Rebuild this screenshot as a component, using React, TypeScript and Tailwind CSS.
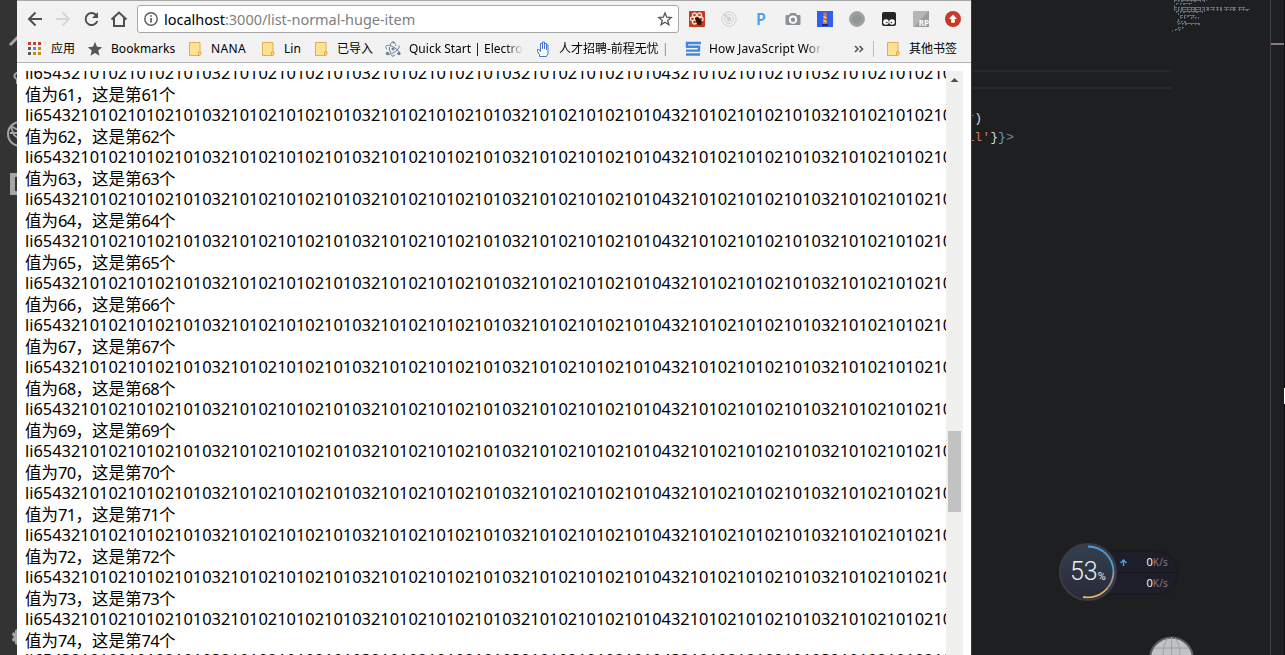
import React from "react";

const f2 = "21010";
const f3 = "3" + f2.repeat(3);
const f4 = "4" + f3.repeat(4);
const huge = "li65" + f4.repeat(2);
const items = Array.from({ length: 15 }, (_, i) => 60 + i + 1);

function Folder() {
  return (
    <svg width="16" height="16" viewBox="0 0 16 16" className="shrink-0">
      <path d="M2.500 1.500h10.500v9.500h1v2.500h-1v1H2.500z" fill="#fee293" stroke="#e3ab55" />
      <path d="M11.500 14v-3h2" fill="none" stroke="#e8a33d" />
    </svg>
  );
}

function Apps() {
  const c = ["#c8402a", "#c8402a", "#c8402a", "#5b5b5b", "#4a90e2", "#c98a12", "#5b5b5b", "#c98a12", "#c98a12"];
  return (
    <svg width="16" height="16" viewBox="0 0 16 16" className="shrink-0">
      {c.map((fill, i) => (
        <rect key={i} x={1 + (i % 3) * 5} y={1 + Math.floor(i / 3) * 5} width="3" height="3" fill={fill} />
      ))}
    </svg>
  );
}

function Star() {
  return (
    <svg width="16" height="16" viewBox="0 0 16 16" className="shrink-0">
      <path d="M8 .8l2 5 5.200.400-4 3.400 1.300 5.200L8 12l-4.500 2.800 1.300-5.200-4-3.400L6 5.800z" fill="#555" />
    </svg>
  );
}

function Atom() {
  return (
    <svg width="18" height="16" viewBox="0 0 18 16" className="-mx-px shrink-0" fill="none" stroke="#667a95" strokeWidth="1">
      <path d="M3 8.500C-1 3 6 3.500 11 7s6 7 2.500 6M6 4.500C8-1.500 11 1 12 5M15 4.500q1.500 2-3 5.500c-4 3-8 4-9 3M7 13.500q2 3.500 4 0M5.500 6v3l1.500 3" />
      <circle cx="9" cy="8" r="1.100" fill="#667a95" />
      <circle cx="3.500" cy="12.500" r="1.200" fill="#667a95" />
      <circle cx="15" cy="12.500" r="1.200" fill="#667a95" />
      <circle cx="9.500" cy="1.500" r=".6" fill="#667a95" />
    </svg>
  );
}

function Hand() {
  return (
    <svg width="16" height="16" viewBox="0 0 16 16" className="shrink-0" fill="#fff" stroke="#3f74d8" strokeWidth="1">
      <path d="M4.500 15.500v-2l-2-3v-2h1.500l1.500 2V2.500h2V8 1h2v7-5.500h2V9 4h1.500v8.500l-1.500 3z" />
    </svg>
  );
}

function Stack() {
  return (
    <svg width="16" height="16" viewBox="0 0 16 16" className="shrink-0" fill="none" stroke="#3f86e5" strokeWidth="2.400">
      <path d="M16 2H2v3.700h12V9.600H1M1 13.500h14" />
    </svg>
  );
}

const INK = "#4f4f52";

function Toolbar() {
  return (
    <div className="flex h-[36px] items-center">
      <div className="flex w-[120px] pl-[10px]">
        <svg width="110" height="18" viewBox="0 0 110 18" fill="none" stroke={INK} strokeWidth="2">
          <path d="M15 9H2.500M8.500 2.500L2 9l6.500 6.500" />
          <path d="M29 9h12.500M35.500 2.500L42 9l-6.500 6.500" stroke="#d6d6da" />
          <path d="M69 5a6 6 0 1 0 1.300 6" />
          <path d="M71 2v6h-6z" fill={INK} stroke="none" />
          <path d="M84.500 9.500L92 2.500l7.500 7M87 8v8h10V8" />
        </svg>
      </div>
      <div className="flex h-[28px] w-[542px] items-center rounded-[3px] border border-[#a9a9a9] bg-white pl-[6px] pr-[6px]">
        <svg width="14" height="14" viewBox="0 0 14 14" fill="none" stroke="#5a5a5a" strokeWidth="1.400">
          <circle cx="7" cy="7" r="6.200" />
          <path d="M7 6v4.500M7 3.200v1.600" strokeWidth="1.700" />
        </svg>
        <span className="ml-[6px] flex-1 whitespace-nowrap text-[14.500px] leading-[20px] tracking-[-0.030px] text-[#808080]">
          <span className="text-black">localhost</span>:3000/list-normal-huge-item
        </span>
        <svg width="16" height="16" viewBox="0 0 16 16" fill="none" stroke="#555" strokeWidth="1.300" className="translate-x-px">
          <path d="M8 2l1.700 4.200 4.500.300-3.500 2.900 1.200 4.400L8 11.300l-3.900 2.500 1.200-4.400-3.500-2.900 4.500-.300z" />
        </svg>
      </div>
      <div className="ml-[10px] flex gap-[16px]">
        <svg width="16" height="16" viewBox="0 0 16 16">
          <rect width="16" height="16" rx="1" fill="#c13a22" />
          <g fill="#c13a22" stroke="#f6e3d0" strokeWidth="1.300">
            <circle cx="5.500" cy="4" r="2" /><circle cx="10.500" cy="4" r="2" /><circle cx="3.500" cy="8" r="2" />
            <circle cx="12" cy="8" r="2" /><circle cx="5.500" cy="11" r="2" />
          </g>
          <path d="M6 7l3-1 4 4-1 4H9l-2-3z" fill="#3a0d08" />
        </svg>
        <svg width="16" height="16" viewBox="0 0 16 16" fill="none" stroke="#d0d0d2" strokeWidth="1">
          <circle cx="8" cy="8" r="7.200" /><circle cx="8" cy="8" r="4.500" /><circle cx="8" cy="8" r="2" fill="#d0d0d2" />
          <path d="M3 3l3 3" strokeWidth="2" />
        </svg>
        <span className="flex h-[16px] w-[16px] items-center justify-center text-[16px] font-semibold leading-[16px] text-[#4aa0e0]">P</span>
        <svg width="16" height="16" viewBox="0 0 16 16">
          <path d="M1.500 4H4l1.500-2h5L12 4h2.500q1 0 1 1v8q0 1-1 1h-13q-1 0-1-1V5q0-1 1-1z" fill="#8e9294" />
          <circle cx="8" cy="8.700" r="3.200" fill="#8e9294" stroke="#fff" strokeWidth="1.800" />
        </svg>
        <svg width="16" height="16" viewBox="0 0 16 16">
          <rect width="16" height="16" fill="#3160ee" />
          <path d="M6.500 1.500h3v2L9.500 5l.5 8H6l.5-8z" fill="#d67b35" />
          <path d="M6.500 5.500l3 1.500M6.500 9.500l3 1.500" stroke="#f2e1b8" strokeWidth="1.200" />
          <path d="M5 14h6" stroke="#222" strokeWidth="1.500" />
        </svg>
        <svg width="16" height="16" viewBox="0 0 16 16"><circle cx="8" cy="8" r="7.500" fill="#9b9f9f" stroke="#aaa" /><circle cx="8" cy="8" r="4.500" fill="#8f9893" /></svg>
        <svg width="16" height="16" viewBox="0 0 16 16">
          <rect x="1" y="1" width="14" height="14" rx="2" fill="#252525" />
          <circle cx="5" cy="11" r="2.800" fill="#fff" /><circle cx="11" cy="11" r="2.800" fill="#fff" />
          <circle cx="5.800" cy="11.500" r=".8" fill="#222" /><circle cx="10.400" cy="11.500" r=".8" fill="#222" />
        </svg>
        <div className="flex h-[16px] w-[16px] items-end justify-end border-l-2 border-[#b5b5b5] bg-linear-to-br from-[#b4b5b5] from-45% to-[#9b9d9d] to-50%">
          <span className="text-[8px] font-bold leading-[9px] text-white">RP</span>
        </div>
        <svg width="16" height="16" viewBox="0 0 16 16"><circle cx="8" cy="8" r="8" fill="#c83a24" /><path d="M8 3.500L12 8H9.800v3.800H6.200V8H4z" fill="#fff" /></svg>
      </div>
    </div>
  );
}

function Mark({ icon, w, children }: { icon: React.ReactNode; w: string; children: React.ReactNode }) {
  return (
    <div className={`flex shrink-0 items-center gap-[8px] ${w}`}>
      {icon}
      {children}
    </div>
  );
}

function Bookmarks() {
  return (
    <div className="-mt-px flex h-[25px] items-center whitespace-nowrap pl-[10px] text-[12px] leading-[18px] text-black">
      <Mark icon={<Apps />} w="w-[60px]"><span>应用</span></Mark>
      <Mark icon={<Star />} w="w-[100px]"><span className="tracking-[0.050px]">Bookmarks</span></Mark>
      <Mark icon={<Folder />} w="w-[73px]"><span className="tracking-[0.400px]">NANA</span></Mark>
      <Mark icon={<Folder />} w="w-[53px]"><span>Lin</span></Mark>
      <Mark icon={<Folder />} w="w-[72px]"><span>已导入</span></Mark>
      <Mark icon={<Atom />} w="w-[150px]">
        <span className="w-[114px] overflow-hidden bg-linear-to-r from-black from-85% to-transparent bg-clip-text text-transparent">Quick Start | Electron</span>
      </Mark>
      <Mark icon={<Hand />} w="w-[150px]">
        <span className="w-[114px] overflow-hidden bg-linear-to-r from-black from-85% to-transparent bg-clip-text text-transparent">人才招聘-前程无忧 | S</span>
      </Mark>
      <Mark icon={<Stack />} w="w-[169px]">
        <span className="w-[114px] overflow-hidden bg-linear-to-r from-black from-85% to-transparent bg-clip-text tracking-[0.150px] text-transparent">How JavaScript Works</span>
      </Mark>
      <svg width="10" height="8" viewBox="0 0 10 8" fill="none" stroke="#555" strokeWidth="1.600"><path d="M1 1l3 3-3 3M5.500 1l3 3-3 3" /></svg>
      <div className="ml-[9px] mr-[11px] h-[16px] w-px bg-[#bdbdbd]" />
      <Mark icon={<Folder />} w="w-[80px]"><span>其他书签</span></Mark>
    </div>
  );
}

function Browser() {
  return (
    <div className="flex h-[655px] w-[954px] shrink-0 flex-col bg-white">
      <div className="flex h-[63px] flex-col border-b border-t border-b-[#b3b3b3] border-t-[#a8a8a8] bg-[#f2f2f2]">
        <Toolbar />
        <Bookmarks />
      </div>
      <div className="mt-[8px] flex h-[584px] pl-[8px]">
        <div className="w-[921px] overflow-hidden whitespace-nowrap text-[16.400px] text-black">
          <div className="-mt-[9px]">
            {items.map((n) => (
              <div key={n}>
                <div className={n === 75 ? "-mt-px h-[21px] leading-[21px]" : "h-[21px] leading-[21px]"}>{huge}</div>
                {n < 75 && (
                  <div className="h-[21px] text-[16.500px] leading-[23px]">
                    值为<span className="tracking-[-0.700px]">{n}</span>，这是第<span className="tracking-[-0.700px]">{n}</span>个
                  </div>
                )}
              </div>
            ))}
          </div>
        </div>
        <div className="flex w-[17px] flex-col items-center bg-[#f0f0ef]">
          <svg width="17" height="17" viewBox="0 0 17 17"><path d="M4.500 11l4-4 4 4z" fill="#505050" /></svg>
          <div className="mt-[343px] h-[81px] w-[13px] bg-[#c1c2c1]" />
        </div>
      </div>
    </div>
  );
}

function ActivityBar() {
  return (
    <svg width="17" height="655" viewBox="0 0 17 655" className="shrink-0 bg-[#333333]" fill="none" stroke="#a5a5a5">
      <path d="M10 45l8-8" strokeWidth="3" />
      <path d="M18 73a3 3 0 1 0-1 6v5" strokeWidth="2" />
      <circle cx="20" cy="134" r="12" strokeWidth="2" />
      <path d="M11 127l3 8 4 3M10 133h8M11 126l7 4" strokeWidth="1.800" />
      <path d="M10 173h8v22h-8z" fill="#a5a5a5" stroke="none" />
      <path d="M18 177h-3v14h3z" fill="#333" stroke="none" />
      <path d="M18 629l-3 1v3l-2-1-1 3 2 2-2 2 1 3 2-1v3l3 1z" fill="#a5a5a5" stroke="none" />
    </svg>
  );
}

const mini = [
  [2, 0, 33, 0], [4, 3, 16, 1], [2, 5, 1, 0], [2, 7, 71, 0], [2, 9, 76, 1], [4, 11, 29, 0], [6, 13, 1, 0],
  [8, 15, 15, 0], [8, 17, 7, 1], [19, 17, 8, 1], [6, 19, 1, 0], [5, 21, 9, 1], [6, 23, 22, 0], [6, 27, 7, 1], [3, 29, 6, 0],
];

function Minimap() {
  return (
    <svg width="98" height="36" viewBox="0 0 98 36" className="ml-[200px]">
      {mini.map(([x, y, w, k], i) => (
        <g key={i} fill="none" opacity="0.650">
          <path d={`M${x} ${y + 0.5}h${w}`} stroke={k ? "#6480a6" : "#8f8f8f"} strokeWidth="1" strokeDasharray="3 1 2 2 5 1" />
          <path d={`M${x} ${y + 1}h${w}`} stroke={k ? "#7f93b0" : "#8899b4"} strokeWidth="2" strokeDasharray="1 3 1 2 2 4" />
        </g>
      ))}
      <path d="M0 31h1" stroke="#888" />
    </svg>
  );
}

function Rate({ icon }: { icon?: React.ReactNode }) {
  return (
    <div className="flex h-[20px] items-center pl-[31px] pr-[8px] leading-[20px]">
      {icon}
      <span className="ml-auto text-[11px] text-white">0</span>
      <span className="text-[10px] tracking-[0.200px] text-[#8d8089]">K/s</span>
    </div>
  );
}

function Meter() {
  return (
    <div className="absolute left-[88px] top-[543px] flex h-[58px] w-[120px] items-center">
      <div className="absolute left-[30px] top-[9px] flex h-[41px] w-[87px] flex-col justify-between rounded-r-[20px] bg-linear-to-b from-[#1d1e2a] from-50% to-[#1e1f2b] font-['Open_Sans'] shadow-[0_0_3px_#111]">
        <Rate
          icon={<svg width="7" height="7" viewBox="0 0 7 7" fill="none" stroke="#4ba4e8" strokeWidth="1.400"><path d="M3.500 7V1M.5 4l3-3 3 3" /></svg>}
        />
        <div className="h-px bg-[#151620]" />
        <Rate />
      </div>
      <div className="relative flex h-[58px] w-[58px] items-center rounded-full border-2 border-[#3a3c42] bg-linear-to-b from-[#33404e] to-[#2a2938] pl-[9px]">
        <svg width="58" height="58" viewBox="0 0 58 58" className="absolute -left-[2px] -top-[2px]" fill="none" strokeWidth="1.800">
          <path d="M29 3.500a25.500 25.500 0 0 1 25.500 25.500" stroke="#4a9de0" />
          <path d="M54.500 29a25.500 25.500 0 0 1-6 16" stroke="#a5949a" />
          <path d="M48.500 45a25.500 25.500 0 0 1-24.500 9" stroke="#dfb25c" />
        </svg>
        <span className="font-[Roboto] text-[25px] font-light leading-[30px] text-[#eee]">53</span>
        <span className="mt-[9px] font-[Roboto] text-[11px] leading-[12px] text-[#eee]">%</span>
      </div>
    </div>
  );
}

function Editor() {
  return (
    <div className="relative flex h-[655px] w-[314px] overflow-hidden bg-[#1e1f20]">
      <div className="w-[299px] shrink-0 overflow-hidden border-l border-[#38393a]">
        <Minimap />
        <div className="mt-[34px] h-[19px] w-[200px] border-b-2 border-t-2 border-[#28282a]" />
        <div className="-ml-[5.600px] mt-[20px] whitespace-pre font-['Liberation_Mono'] text-[13.200px] leading-[19px] text-[#d4d4d4]">
          <div><span className="text-[#569cd6]">r</span>)</div>
          <div><span className="text-[#ce7b55]">ll'</span>{"}"}<span className="text-[#569cd6]">{"}"}</span><span className="text-[#808080]">&gt;</span></div>
        </div>
      </div>
      <div className="w-[14px] border-l border-[#414142] pt-[43px]">
        <div className="h-[2px] bg-[#8b7680]" />
      </div>
      <div className="w-px bg-[#101012] pt-[388px]"><div className="h-[16px] bg-white" /></div>
      <Meter />
      <svg width="46" height="20" viewBox="0 0 46 20" className="absolute left-[178px] top-[636px]">
        <circle cx="22.500" cy="23" r="21.500" fill="#c0c3c3" stroke="#5b5b5d" strokeWidth="2" />
        <path d="M5 12h35M22.500 1v19M14 20q0-12 5-18M31 20q0-12-5-18" fill="none" stroke="#9c9ea6" />
      </svg>
    </div>
  );
}

export default function App() {
  return (
    <div className="flex h-[655px] w-[1285px] overflow-hidden bg-[#1e1f20] font-['Noto_Sans','Noto_Sans_CJK_SC',sans-serif]">
      <ActivityBar />
      <Browser />
      <Editor />
    </div>
  );
}
